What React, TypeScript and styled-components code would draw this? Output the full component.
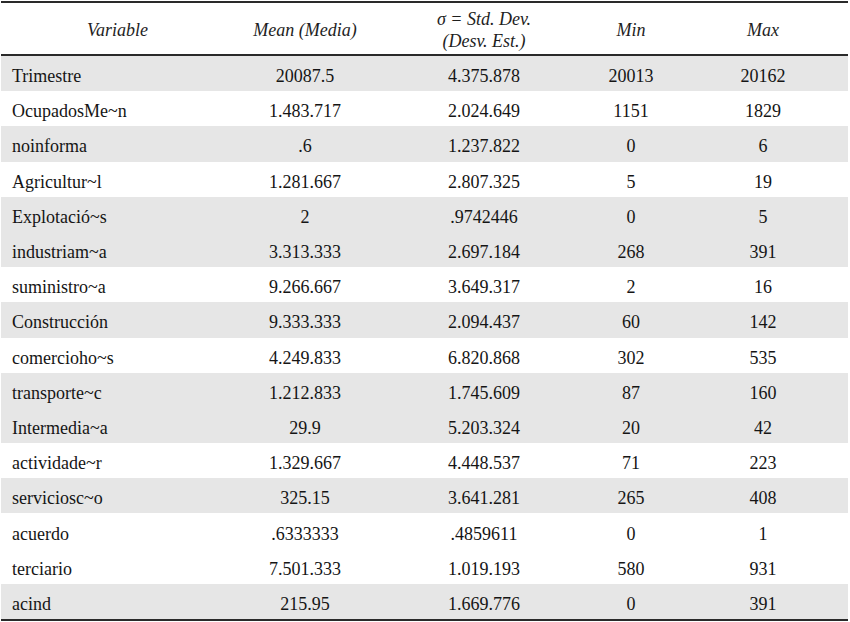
import React from "react";
import styled, { createGlobalStyle } from "styled-components";

const Global = createGlobalStyle`
  html, body { margin: 0; padding: 0; background: #ffffff; }
  body { font-family: "Liberation Serif", "Times New Roman", serif; color: #151515; }
`;

const Page = styled.div`
  width: 850px;
  height: 622px;
  padding: 1px 0 0 1px;
  box-sizing: border-box;
  background: #ffffff;
`;

const Table = styled.div`
  width: 847px;
  font-family: "Liberation Serif", "Times New Roman", serif;
  font-size: 18px;
  color: #151515;
  border-top: 2px solid #2a2a2a;
  border-bottom: 2px solid #2a2a2a;
`;

const columns = "225px 158px 200px 94px 170px";

const HeaderRow = styled.div`
  display: grid;
  grid-template-columns: ${columns};
  align-items: center;
  height: 53px;
  padding-top: 3px;
  box-sizing: border-box;
  border-bottom: 2px solid #2a2a2a;
`;

const HeadCell = styled.div<{ $first?: boolean }>`
  padding-left: ${(p) => (p.$first ? "8px" : "0")};
  font-style: italic;
  font-size: 18px;
  line-height: 22px;
  text-align: center;
  color: #1e1e1e;
`;

const Row = styled.div<{ $shade: boolean }>`
  display: grid;
  grid-template-columns: ${columns};
  align-items: center;
  height: 35.19px;
  padding-top: 5px;
  box-sizing: border-box;
  background: ${(p) => (p.$shade ? "#e6e6e6" : "#ffffff")};
`;

const Cell = styled.div<{ $left?: boolean }>`
  padding-left: ${(p) => (p.$left ? "11px" : "0")};
  text-align: ${(p) => (p.$left ? "left" : "center")};
  white-space: nowrap;
  line-height: 22px;
`;

type R = [string, string, string, string, string, boolean];

const rows: R[] = [
  ["Trimestre", "20087.5", "4.375.878", "20013", "20162", true],
  ["OcupadosMe~n", "1.483.717", "2.024.649", "1151", "1829", false],
  ["noinforma", ".6", "1.237.822", "0", "6", true],
  ["Agricultur~l", "1.281.667", "2.807.325", "5", "19", false],
  ["Explotació~s", "2", ".9742446", "0", "5", true],
  ["industriam~a", "3.313.333", "2.697.184", "268", "391", true],
  ["suministro~a", "9.266.667", "3.649.317", "2", "16", false],
  ["Construcción", "9.333.333", "2.094.437", "60", "142", true],
  ["comercioho~s", "4.249.833", "6.820.868", "302", "535", false],
  ["transporte~c", "1.212.833", "1.745.609", "87", "160", true],
  ["Intermedia~a", "29.9", "5.203.324", "20", "42", true],
  ["actividade~r", "1.329.667", "4.448.537", "71", "223", false],
  ["serviciosc~o", "325.15", "3.641.281", "265", "408", true],
  ["acuerdo", ".6333333", ".4859611", "0", "1", false],
  ["terciario", "7.501.333", "1.019.193", "580", "931", false],
  ["acind", "215.95", "1.669.776", "0", "391", true],
];

export default function App() {
  return (
    <Page>
      <Global />
      <Table role="table">
        <HeaderRow role="row">
          <HeadCell $first role="columnheader">Variable</HeadCell>
          <HeadCell role="columnheader">Mean (Media)</HeadCell>
          <HeadCell role="columnheader">
            σ = Std. Dev.
            <br />
            (Desv. Est.)
          </HeadCell>
          <HeadCell role="columnheader">Min</HeadCell>
          <HeadCell role="columnheader">Max</HeadCell>
        </HeaderRow>
        {rows.map((r) => (
          <Row key={r[0]} $shade={r[5]} role="row">
            <Cell $left role="cell">{r[0]}</Cell>
            <Cell role="cell">{r[1]}</Cell>
            <Cell role="cell">{r[2]}</Cell>
            <Cell role="cell">{r[3]}</Cell>
            <Cell role="cell">{r[4]}</Cell>
          </Row>
        ))}
      </Table>
    </Page>
  );
}
